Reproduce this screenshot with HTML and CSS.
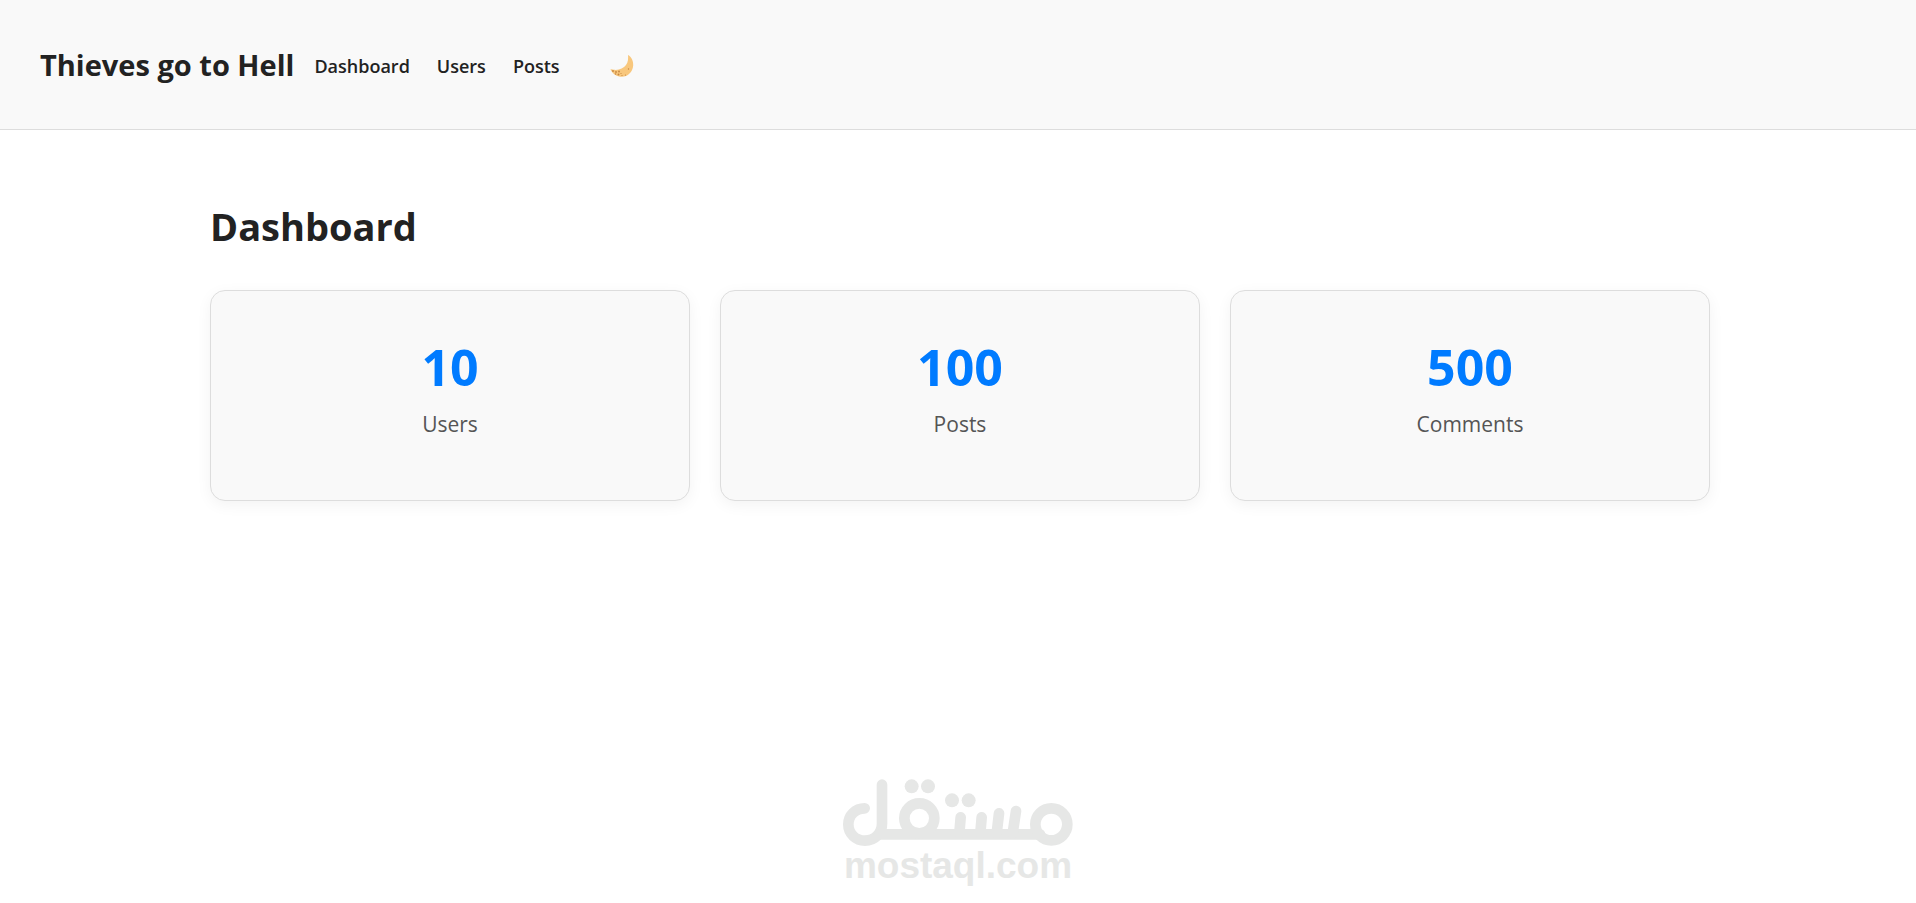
FILE: index.html
```html
<!DOCTYPE html>
<html lang="en">
<head>
    <meta charset="UTF-8">
    <meta name="viewport" content="width=device-width, initial-scale=1.0">
    <title>Dashboard</title>
    <link rel="stylesheet" href="styles.css">
</head>
<body>

<header class="navbar">
    <h2 class="brand">Thieves go to Hell</h2>
    <nav class="nav-links">
        <a href="#dashboard">Dashboard</a>
        <a href="#users">Users</a>
        <a href="#posts">Posts</a>
    </nav>
    <button class="theme-toggle" type="button" aria-label="Toggle dark mode">
        <svg width="24" height="24" viewBox="0 0 24 24">
            <path d="M18 1C21.500 3 23.500 7 23.200 11.500C22.800 18 17.500 22.800 12 22.800C7 22.800 2.500 20 .5 15.500C1.500 15 2.500 15.800 4 15.800C9 16.300 13.500 14.500 16 11C18.200 8 18.300 4.500 18 1Z" fill="#f8c77d"/>
            <g fill="#c68642">
                <circle cx="3" cy="17" r=".9"/>
                <circle cx="6" cy="18" r=".9"/>
                <circle cx="9" cy="17.500" r=".9"/>
                <circle cx="5.500" cy="20" r=".8"/>
                <circle cx="8.500" cy="20.500" r=".9"/>
                <circle cx="11" cy="19.500" r=".6"/>
                <circle cx="12" cy="21.500" r=".6"/>
                <circle cx="15.500" cy="21" r=".6"/>
                <circle cx="18.500" cy="15" r=".7"/>
            </g>
        </svg>
    </button>
</header>

<main class="container">
    <h1>Dashboard</h1>
    <div class="cards">
        <div class="card">
            <h2>10</h2>
            <p>Users</p>
        </div>
        <div class="card">
            <h2>100</h2>
            <p>Posts</p>
        </div>
        <div class="card">
            <h2>500</h2>
            <p>Comments</p>
        </div>
    </div>
</main>

<footer class="watermark">
    <svg width="230" height="68" viewBox="39 24 690 204" role="img" aria-label="مستقل">
        <g fill="none" stroke="#e6e7e6" stroke-width="32" stroke-linecap="round" stroke-linejoin="round">
            <path d="M104 115C76 115 55 136 55 163C55 191 77 212 105 212C134 212 156 190 156 161V44"/>
            <path d="M148 193H630"/>
            <circle cx="268" cy="145" r="45"/>
            <circle cx="664" cy="163" r="48"/>
            <path d="M392 142L388 190M455 142L451 190M507 130L500 190M558 123L548 190"/>
        </g>
        <g fill="#e6e7e6">
            <circle cx="245" cy="49" r="21"/>
            <circle cx="294" cy="49" r="21"/>
            <circle cx="366" cy="91" r="21"/>
            <circle cx="416" cy="91" r="21"/>
        </g>
    </svg>
    <span>mostaql.com</span>
</footer>

</body>
</html>
```

FILE: styles.css
```css
* {
    box-sizing: border-box;
}
body {
    margin: 0;
    min-height: 100vh;
    display: flex;
    flex-direction: column;
    font-family: "Segoe UI", "Open Sans", "Noto Sans", sans-serif;
    background-color: #ffffff;
    color: #222;
}
.navbar {
    display: flex;
    align-items: center;
    padding: 40px;
    min-height: 130px;
    background-color: #f9f9f9;
    border-bottom: 1px solid #ddd;
}
.brand {
    margin: 0 20px 0 0;
    font-size: 29px;
    line-height: 40px;
    font-weight: 700;
}
.nav-links {
    display: flex;
    gap: 27px;
    padding-top: 2px;
}
.nav-links a {
    color: #222;
    text-decoration: none;
    font-size: 18px;
    font-weight: 600;
}
.theme-toggle {
    display: flex;
    margin-left: 50px;
    padding: 2px 0 0;
    background: none;
    border: none;
    cursor: pointer;
}
.container {
    width: 100%;
    max-width: 1564px;
    margin: 0 auto;
    padding: 64px 30px 40px 34px;
}
h1 {
    margin: 0 0 32px;
    font-size: 38px;
    line-height: 64px;
}
.cards {
    display: grid;
    grid-template-columns: repeat(3, 1fr);
    gap: 30px;
}
.card {
    padding: 40px 30px 60px;
    text-align: center;
    background-color: #f9f9f9;
    border: 1px solid #ddd;
    border-radius: 15px;
    box-shadow: 0 4px 15px rgba(0,0,0,0.05);
}
.card h2 {
    margin: 0 0 6px;
    font-size: 50px;
    line-height: 72px;
    color: #007BFF;
}
.card p {
    margin: 0;
    font-size: 21px;
    line-height: 31px;
    color: #555;
}
.watermark {
    display: flex;
    flex-direction: column;
    align-items: center;
    margin-top: auto;
    padding-bottom: 18px;
    font-family: "Liberation Sans", Arial, sans-serif;
    font-size: 37px;
    line-height: 39px;
    font-weight: 700;
    color: #e6e7e6;
}
```
